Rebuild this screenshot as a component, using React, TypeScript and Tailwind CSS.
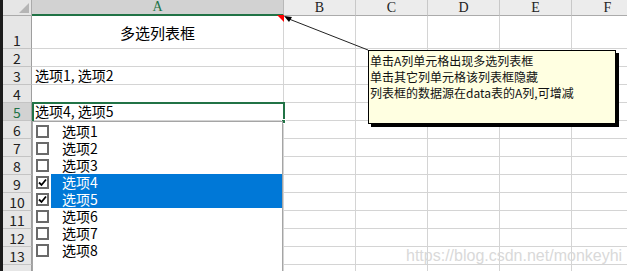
import React from "react";

const CJK = { fontFamily: '"Noto Sans CJK SC", "Liberation Sans", sans-serif' };

const cols = ["B", "C", "D", "E", "F"];

function RowHeader({ n, h, selected, bottom }: { n?: number; h: string; selected?: boolean; bottom?: boolean }) {
  return (
    <div
      className={`${h} w-[29px] shrink-0 flex justify-center border-b border-r border-b-[#c4c4c4] border-r-[#9e9e9e] ${selected ? "bg-[#d2d2d2] text-[#217346]" : "bg-[#e6e6e6] text-[#222]"} ${bottom ? "items-end" : "items-center"} text-[14px] leading-[16px]`}
      style={CJK}
    >
      {n}
    </div>
  );
}

function Row({ n, h, a, center, selected }: { n?: number; h: string; a?: string; center?: boolean; selected?: boolean }) {
  return (
    <div className={`flex ${h} shrink-0`}>
      <RowHeader n={n} h={h} selected={selected} bottom={n === 1} />
      <div
        className={`w-[252px] shrink-0 border-b border-r border-[#d4d4d4] flex ${center ? "items-center justify-center pt-[1px]" : "items-end pl-[3px]"} text-[14px] leading-[17px] text-black`}
        style={CJK}
      >
        <span className={center ? "text-[15px]" : ""}>{a}</span>
      </div>
      {cols.map((c) => (
        <div key={c} className="w-[72px] shrink-0 border-b border-r border-[#d4d4d4]" />
      ))}
    </div>
  );
}

function Check({ checked }: { checked?: boolean }) {
  return (
    <div className="w-[13px] h-[13px] border-2 border-[#6a6a6a] bg-white flex items-center justify-center shrink-0">
      {checked && (
        <svg width="9" height="9" viewBox="0 0 9 9">
          <path d="M1 4.5 L3.5 7 L8 1.5" stroke="#000" strokeWidth="1.8" fill="none" />
        </svg>
      )}
    </div>
  );
}

export default function App() {
  const items = [1, 2, 3, 4, 5, 6, 7, 8];
  return (
    <div className="relative w-[627px] h-[271px] overflow-hidden bg-white flex">
      <div className="w-[3px] shrink-0 bg-[#1c1c1c]" />
      <div className="flex flex-col">
        {/* header */}
        <div className="flex h-[16px] shrink-0">
          <div className="relative w-[29px] h-[16px] shrink-0 bg-[#e6e6e6] border-r border-b border-[#ababab]">
            <svg className="absolute right-[2px] bottom-[2px]" width="10" height="10" viewBox="0 0 10 10">
              <polygon points="10,0 10,10 0,10" fill="#b5b5b5" />
            </svg>
          </div>
          <div
            className="w-[252px] h-[16px] shrink-0 bg-[#d2d2d2] border-r border-[#b8b8b8] border-b-2 border-b-[#217346] flex items-center justify-center text-[#217346] text-[14px] leading-[14px]"
            style={{ fontFamily: '"Liberation Serif", serif' }}
          >
            A
          </div>
          {cols.map((c) => (
            <div
              key={c}
              className="w-[72px] h-[16px] shrink-0 bg-[#ececec] border-r border-b border-r-[#c8c8c8] border-b-[#ababab] flex items-center justify-center text-[#222] text-[14px] leading-[14px]"
              style={{ fontFamily: '"Liberation Serif", serif' }}
            >
              {c}
            </div>
          ))}
        </div>
        <Row n={1} h="h-[33px]" a="多选列表框" center />
        <Row n={2} h="h-[18px]" />
        <Row n={3} h="h-[18px]" a="选项1, 选项2" />
        <Row n={4} h="h-[18px]" />
        <Row n={5} h="h-[18px]" a="选项4, 选项5" selected />
        {[6, 7, 8, 9, 10, 11, 12, 13].map((n) => (
          <Row key={n} n={n} h="h-[18px]" />
        ))}
        <Row h="h-[18px]" />
      </div>

      {/* selection rectangle around A5 */}
      <div className="absolute left-[32px] top-[102px] w-[253px] h-[21px] border-2 border-[#217346]" />
      <div className="absolute left-[281px] top-[119px] w-[5px] h-[5px] bg-[#217346] border border-white" />

      {/* list box */}
      <div className="absolute left-[32px] top-[121px] w-[251px] h-[160px] bg-white border border-[#a5a5a5] pt-[1px]" style={CJK}>
        {items.map((i) => {
          const sel = i === 4 || i === 5;
          return (
            <div key={i} className="flex items-center h-[17px]">
              <div className="w-[18px] pl-[3px] flex items-center shrink-0">
                <Check checked={sel} />
              </div>
              <div className={`flex-1 h-[17px] flex items-center pl-[11px] text-[14px] leading-[17px] ${sel ? "bg-[#0078d7] text-white" : "text-black"}`}>
                选项{i}
              </div>
            </div>
          );
        })}
      </div>

      {/* comment indicator */}
      <svg className="absolute left-[277px] top-[15px]" width="7" height="7" viewBox="0 0 7 7">
        <polygon points="0,0 7,0 7,7" fill="#ff0000" />
      </svg>

      {/* arrow */}
      <svg className="absolute left-0 top-0" width="627" height="271" viewBox="0 0 627 271">
        <line x1="368" y1="50" x2="289" y2="19" stroke="#222" strokeWidth="1" />
        <polygon points="284,16 292,17 289,22" fill="#000" />
      </svg>

      {/* comment box */}
      <div
        className="absolute left-[368px] top-[50px] w-[248px] h-[74px] bg-[#ffffe1] border border-black shadow-[3px_3px_0_#000] pl-[1px] pt-[2px] text-[12px] leading-[16px] text-[#111]"
        style={CJK}
      >
        <div>单击A列单元格出现多选列表框</div>
        <div>单击其它列单元格该列表框隐藏</div>
        <div>列表框的数据源在data表的A列,可增减</div>
      </div>

      {/* watermark */}
      <div
        className="absolute left-[406px] top-[247px] text-[16px] leading-[18px] text-[#d9d9d9]"
        style={{ fontFamily: '"Liberation Sans", Arial, sans-serif' }}
      >
        https://blog.csdn.net/monkeyhi
      </div>
    </div>
  );
}
